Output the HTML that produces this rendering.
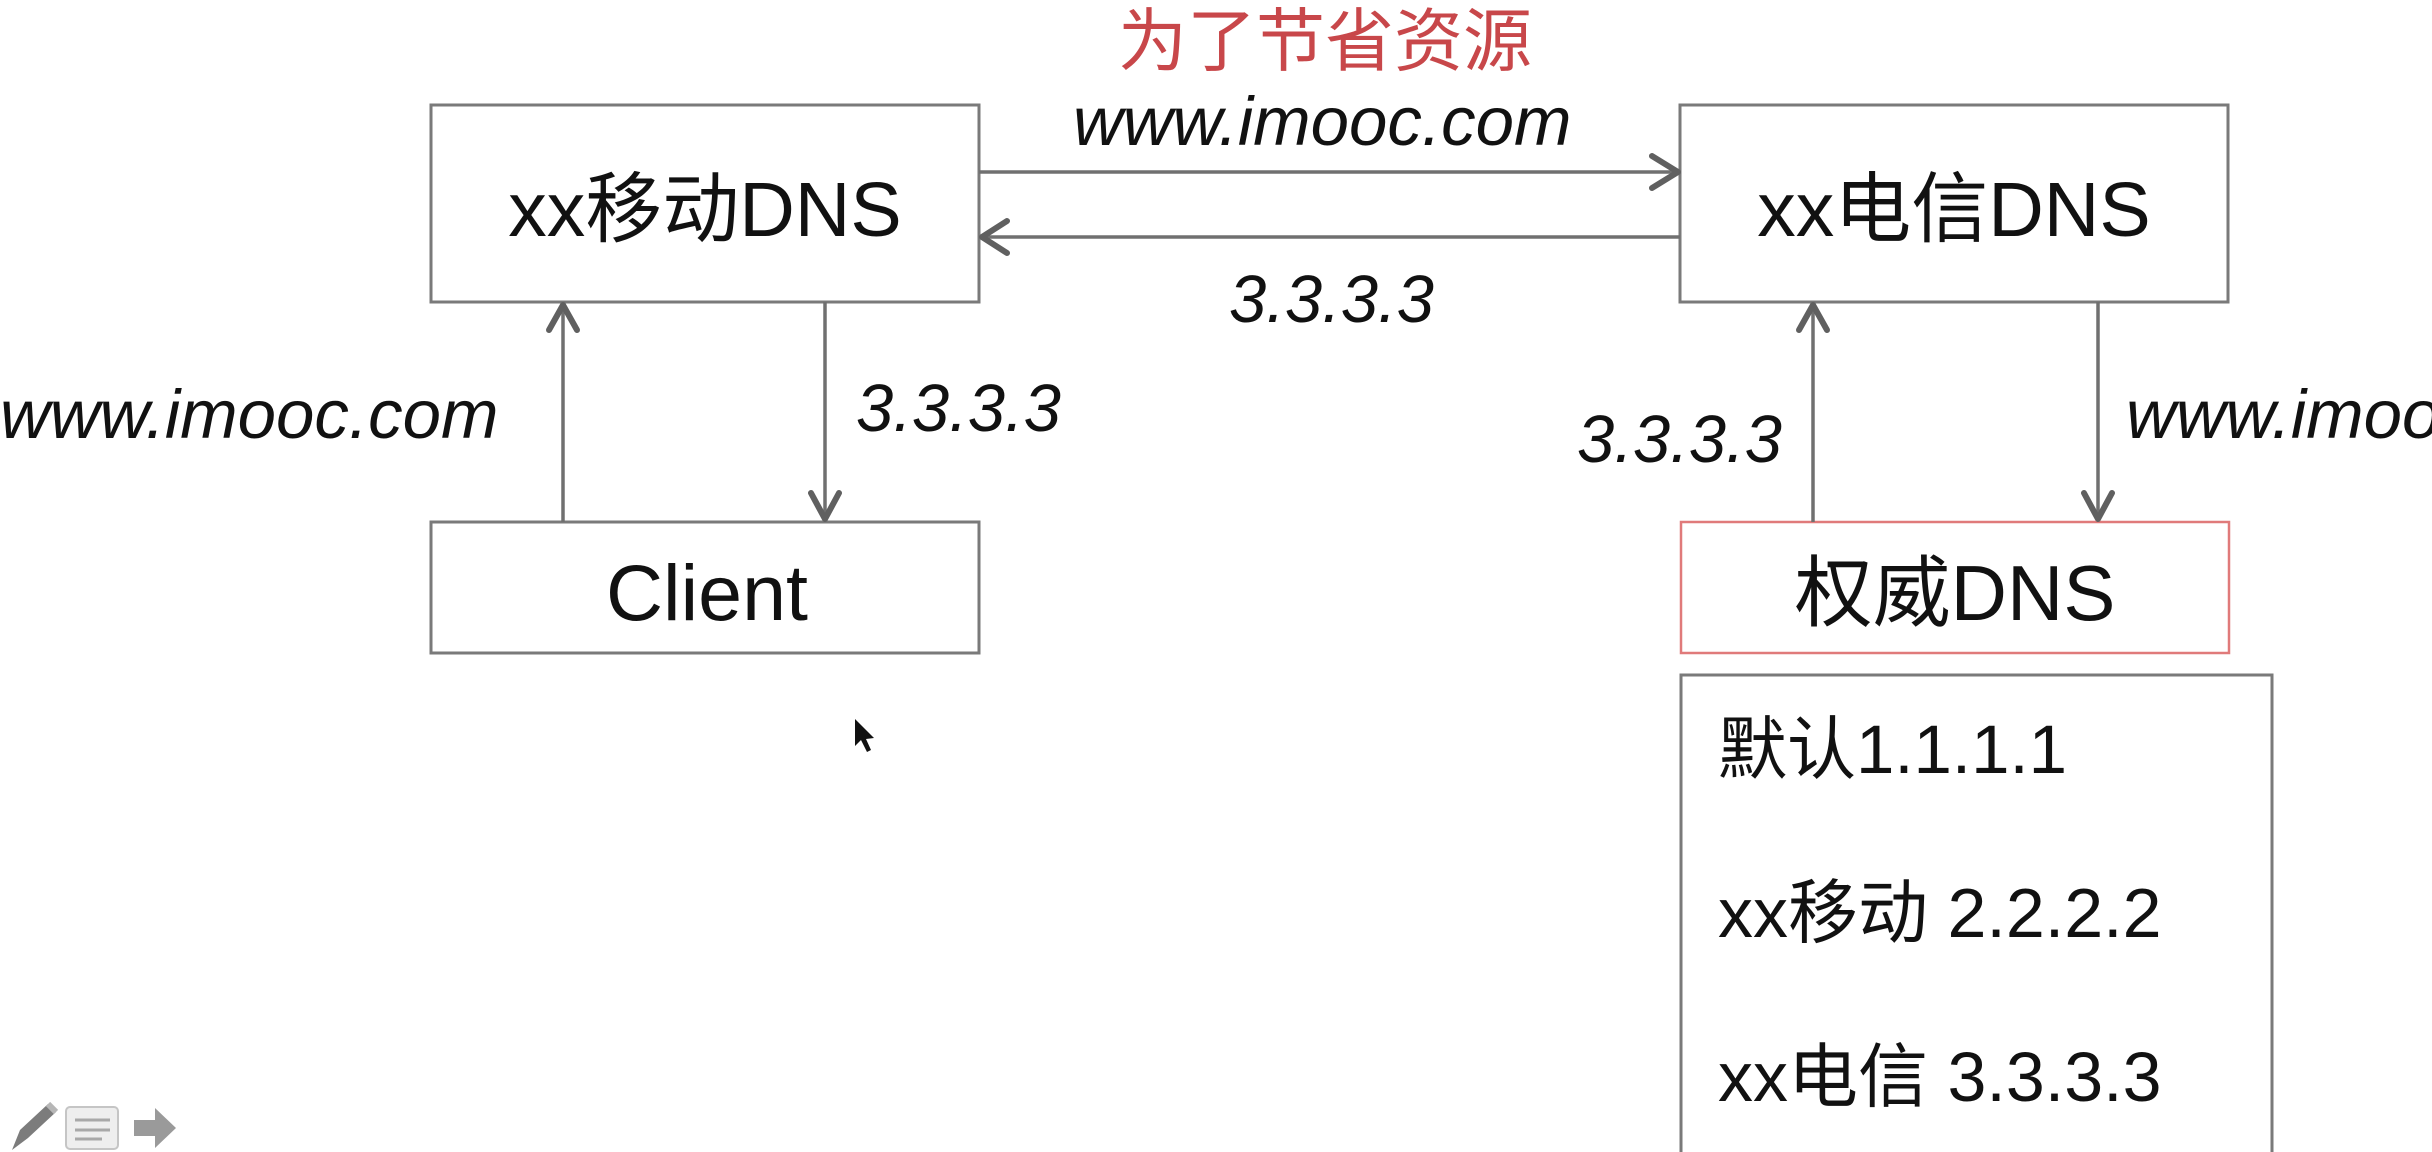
<!DOCTYPE html>
<html><head><meta charset="utf-8"><style>
html,body{margin:0;padding:0;background:#fff;}
svg{display:block}
text{font-family:"Liberation Sans","Noto Sans CJK SC",sans-serif;fill:#111;}
</style></head><body>
<svg width="2432" height="1152" viewBox="0 0 2432 1152" xmlns="http://www.w3.org/2000/svg">
<rect width="2432" height="1152" fill="#fff"/>
<g fill="none" stroke="#7a7a7a" stroke-width="3">
<rect x="431" y="105" width="548" height="197"/>
<rect x="1680" y="105" width="548" height="197"/>
<rect x="431" y="522" width="548" height="131"/>
<rect x="1681" y="675" width="591" height="490"/>
</g>
<rect x="1681" y="522" width="548" height="131" fill="none" stroke="#e07a7a" stroke-width="2.5"/>
<g stroke="#707070" stroke-width="3.5" fill="none">
<line x1="979" y1="172" x2="1678" y2="172"/>
<line x1="982" y1="237" x2="1680" y2="237"/>
<line x1="563" y1="304" x2="563" y2="522"/>
<line x1="825" y1="302" x2="825" y2="519"/>
<line x1="1813" y1="304" x2="1813" y2="522"/>
<line x1="2098" y1="302" x2="2098" y2="519"/>
</g>
<g stroke="#606060" stroke-width="6" fill="none" stroke-linecap="round" stroke-linejoin="round">
<polyline points="1652,156 1678,172 1652,188"/>
<polyline points="1007,221 982,237 1007,253"/>
<polyline points="549,330 563,305 577,330"/>
<polyline points="811,493 825,519 839,493"/>
<polyline points="1799,330 1813,305 1827,330"/>
<polyline points="2084,493 2098,519 2112,493"/>
</g>
<text x="1325" y="65" font-size="69" text-anchor="middle" style="fill:#c8474a">为了节省资源</text>
<text x="705" y="236" font-size="77" text-anchor="middle">xx移动DNS</text>
<text x="1954" y="236" font-size="77" text-anchor="middle">xx电信DNS</text>
<text x="707" y="620" font-size="79" text-anchor="middle">Client</text>
<text x="1955" y="620" font-size="78" text-anchor="middle">权威DNS</text>
<text x="1073" y="145" font-size="69" font-style="italic">www.imooc.com</text>
<text x="1229" y="322" font-size="67" font-style="italic">3.3.3.3</text>
<text x="0" y="438" font-size="69" font-style="italic">www.imooc.com</text>
<text x="856" y="431" font-size="67" font-style="italic">3.3.3.3</text>
<text x="1577" y="462" font-size="67" font-style="italic">3.3.3.3</text>
<text x="2126" y="438" font-size="69" font-style="italic">www.imooc.com</text>
<text x="1718" y="773" font-size="69">默认1.1.1.1</text>
<text x="1718" y="937" font-size="70">xx移动 2.2.2.2</text>
<text x="1718" y="1101" font-size="70">xx电信 3.3.3.3</text>
<path d="M855,719 L855,746 L861,740 L867,752 L871,750 L866,739 L874,738 Z" fill="#111"/>
<g opacity="0.85">
<path d="M12,1150 L20,1130 L48,1104 L56,1112 L28,1138 Z" fill="#666"/>
<path d="M48,1104 L56,1112" stroke="#aaa" stroke-width="6"/>
<rect x="66" y="1107" width="52" height="42" rx="4" fill="#ececec" stroke="#bbb" stroke-width="2"/>
<g stroke="#999" stroke-width="3"><line x1="75" y1="1120" x2="110" y2="1120"/><line x1="75" y1="1130" x2="110" y2="1130"/><line x1="75" y1="1139" x2="102" y2="1139"/></g>
<path d="M134,1120 L155,1120 L155,1108 L176,1128 L155,1148 L155,1136 L134,1136 Z" fill="#888"/>
</g>
</svg>
</body></html>
